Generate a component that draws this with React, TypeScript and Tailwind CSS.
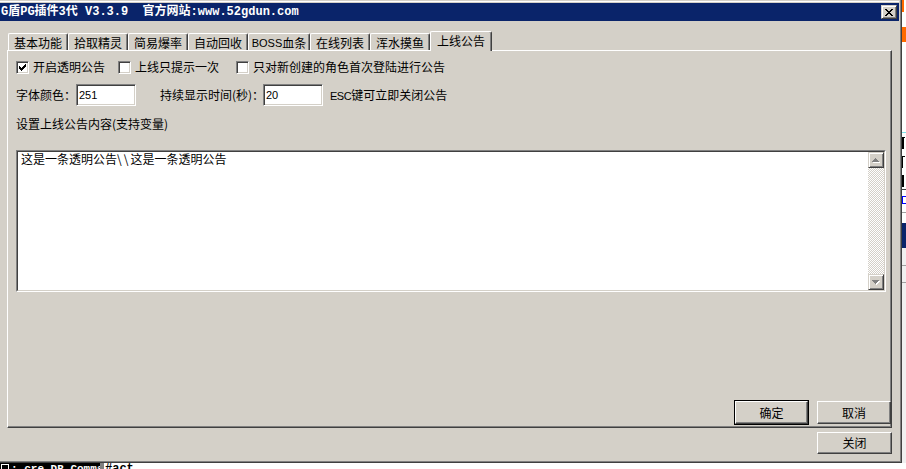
import React from "react";

const lat = "font-['Liberation_Sans',sans-serif] text-[11px]";
const raised =
  "border border-t-white border-l-white border-r-[#404040] border-b-[#404040] shadow-[inset_-1px_-1px_0_#808080] bg-[#d4d0c8]";
const raisedSb =
  "border border-t-[#d4d0c8] border-l-[#d4d0c8] border-r-[#404040] border-b-[#404040] shadow-[inset_1px_1px_0_#ffffff,inset_-1px_-1px_0_#808080] bg-[#d4d0c8]";
const sunken =
  "border border-t-[#808080] border-l-[#808080] border-r-white border-b-white shadow-[inset_1px_1px_0_#404040,inset_-1px_-1px_0_#d4d0c8]";

function Check({ checked, className = "" }: { checked?: boolean; className?: string }) {
  return (
    <div className={`w-[13px] h-[13px] shrink-0 bg-white ${sunken} flex items-center justify-center ${className}`}>
      {checked && (
        <svg width="7" height="7" viewBox="0 0 7 7" shapeRendering="crispEdges">
          {[
            [0, 2],
            [1, 3],
            [2, 4],
            [3, 3],
            [4, 2],
            [5, 1],
            [6, 0],
          ].map(([x, y]) => (
            <rect key={x} x={x} y={y} width="1" height="3" fill="#000" />
          ))}
        </svg>
      )}
    </div>
  );
}

function Arrow({ down }: { down?: boolean }) {
  const rows = [
    [3, 1],
    [2, 3],
    [1, 5],
    [0, 7],
  ];
  const tri = (dx: number, dy: number, fill: string) =>
    rows.map(([x, w], i) => (
      <rect key={fill + i} x={x + dx} y={(down ? 3 - i : i) + dy} width={w} height="1" fill={fill} />
    ));
  return (
    <svg width="8" height="5" viewBox="0 0 8 5" shapeRendering="crispEdges">
      {tri(1, 1, "#ffffff")}
      {tri(0, 0, "#808080")}
    </svg>
  );
}

function CloseGlyph() {
  const rows = ["XX....XX", ".XX..XX.", "..XXXX..", "...XX...", "..XXXX..", ".XX..XX.", "XX....XX"];
  return (
    <svg width="8" height="7" viewBox="0 0 8 7" shapeRendering="crispEdges">
      {rows.flatMap((r, y) =>
        r.split("").map((c, x) => (c === "X" ? <rect key={`${x}-${y}`} x={x} y={y} width="1" height="1" fill="#000" /> : null))
      )}
    </svg>
  );
}

const tabs: { label: React.ReactNode; w: string }[] = [
  { label: "基本功能", w: "w-[60px]" },
  { label: "拾取精灵", w: "w-[60px]" },
  { label: "简易爆率", w: "w-[60px]" },
  { label: "自动回收", w: "w-[60px]" },
  {
    label: (
      <>
        <span className={lat}>BOSS</span>血条
      </>
    ),
    w: "w-[62px]",
  },
  { label: "在线列表", w: "w-[60px]" },
  { label: "浑水摸鱼", w: "w-[60px]" },
];

export default function App() {
  return (
    <div className="w-[906px] h-[469px] overflow-hidden bg-white flex flex-col font-['Noto_Sans_CJK_SC',sans-serif] text-[12px] leading-[16px] text-black">
      <div className="flex h-[463px]">
        {/* Window */}
        <div className="w-[902px] h-[463px] flex flex-col bg-[#d4d0c8] border-r border-b border-r-[#404040] border-b-[#404040] shadow-[inset_-1px_-1px_0_#808080] pr-[2px] pb-[2px]">
          <div className="h-[1px]" />
          <div className="h-[1px] bg-white" />
          <div className="h-[1px]" />
          {/* Title bar */}
          <div className="h-[18px] bg-[#0a246a] flex items-center pl-[1px]">
            <span className="font-['Liberation_Mono','Noto_Sans_CJK_SC',monospace] font-bold text-[12px] leading-[16px] text-white whitespace-pre">
              G盾PG插件3代 V3.3.9  官方网站:www.52gdun.com
            </span>
            <div className={`ml-auto mr-[2px] w-[16px] h-[14px] ${raisedSb} flex items-center justify-center`}>
              <CloseGlyph />
            </div>
          </div>
          {/* Body */}
          <div className="flex-1 flex flex-col pt-[10px]">
            {/* Tabs */}
            <div className="h-[19px] flex items-end ml-[8px]">
              {tabs.map((t, i) => (
                <div
                  key={i}
                  className={`${t.w} h-[17px] border-t border-l border-r border-t-white border-l-white border-r-[#404040] shadow-[inset_-1px_0_0_#808080] rounded-t-[2px] flex items-center justify-center pt-[1px] whitespace-nowrap`}
                >
                  {t.label}
                </div>
              ))}
              <div className="w-[62px] h-[20px] mb-[-1px] relative z-10 bg-[#d4d0c8] border-t border-l border-r border-t-white border-l-white border-r-[#404040] shadow-[inset_-1px_0_0_#808080] rounded-t-[2px] flex justify-center pt-[1px] whitespace-nowrap">
                上线公告
              </div>
            </div>
            {/* Panel */}
            <div className="ml-[7px] w-[885px] h-[378px] border border-t-white border-l-white border-r-[#404040] border-b-[#404040] shadow-[inset_-1px_-1px_0_#808080] flex flex-col pl-[8px] pt-[8px] pb-[2px]">
              <div className="h-[16px] flex items-center whitespace-nowrap">
                <Check checked />
                <span className="ml-[4px]">开启透明公告</span>
                <Check className="ml-[13px]" />
                <span className="ml-[4px]">上线只提示一次</span>
                <Check className="ml-[17px]" />
                <span className="ml-[4px]">只对新创建的角色首次登陆进行公告</span>
              </div>
              <div className="mt-[9px] h-[22px] flex items-center whitespace-nowrap">
                <span className="w-[60px]">字体颜色：</span>
                <div className={`w-[60px] h-[22px] bg-white ${sunken} pl-[2px] flex items-center`}>
                  <span className={lat}>251</span>
                </div>
                <span className="ml-[24px] w-[103px]">持续显示时间(秒)：</span>
                <div className={`w-[60px] h-[22px] bg-white ${sunken} pl-[2px] flex items-center`}>
                  <span className={lat}>20</span>
                </div>
                <span className="ml-[7px]">
                  <span className={`${lat} tracking-[-0.5px]`}>ESC</span>键可立即关闭公告
                </span>
              </div>
              <div className="mt-[10px] h-[16px] whitespace-nowrap">设置上线公告内容(支持变量)</div>
              {/* Text area */}
              <div className="mt-[18px] w-[870px] h-[142px] border border-t-[#808080] border-l-[#808080] border-r-white border-b-white flex">
                <div className="flex-1 border border-t-[#404040] border-l-[#404040] border-r-[#d4d0c8] border-b-[#d4d0c8] bg-white flex">
                  <div className="flex-1 pl-[3px] leading-[14px] whitespace-pre">
                    这是一条透明公告<span className="tracking-[2px]">\\</span>这是一条透明公告
                  </div>
                  <div className="w-[16px] flex flex-col">
                    <div className={`h-[16px] ${raisedSb} flex items-center justify-center`}>
                      <Arrow />
                    </div>
                    <div className="flex-1 bg-[image:repeating-conic-gradient(#d4d0c8_0%_25%,#ffffff_0%_50%)] bg-[length:2px_2px]" />
                    <div className={`h-[16px] ${raisedSb} flex items-center justify-center`}>
                      <Arrow down />
                    </div>
                  </div>
                </div>
              </div>
              <div className="mt-auto h-[25px] flex items-center justify-end">
                <div className="w-[75px] h-[25px] border border-black flex">
                  <div className={`flex-1 ${raised} flex items-center justify-center`}>确定</div>
                </div>
                <div className={`ml-[8px] w-[74px] h-[23px] ${raised} flex items-center justify-center`}>取消</div>
              </div>
            </div>
            <div className="mt-[4px] ml-[817px] w-[75px] h-[22px] flex">
              <div className={`flex-1 ${raised} flex items-center justify-center`}>关闭</div>
            </div>
          </div>
        </div>
        {/* Background windows strip */}
        <div className="w-[4px] h-[463px] flex flex-col bg-white overflow-hidden">
          <div className="h-[12px] flex">
            <div className="w-[2px] bg-[#ff6a00]" />
          </div>
          <div className="h-[15px]" />
          <div className="h-[15px] bg-[#ff6a00]" />
          <div className="h-[90px]" />
          <div className="h-[1px] bg-[#7fe0e8]" />
          <div className="h-[56px] pt-[4px] flex flex-col gap-[7px]">
            <div className="w-[3px] h-[12px] border-l-2 border-t border-black" />
            <div className="w-[3px] h-[12px] border-l border-t border-black" />
            <div className="w-[3px] h-[12px] border-l-2 border-black" />
          </div>
          <div className="h-[1px] bg-[#404040]" />
          <div className="h-[6px]" />
          <div className="h-[8px] border-l border-t border-b border-[#0000ff]" />
          <div className="h-[8px]" />
          <div className="h-[1px] bg-[#a0a0a0]" />
          <div className="h-[10px]" />
          <div className="h-[25px] bg-[#0a246a]" />
          <div className="h-[17px] bg-[#f0f0f0]" />
          <div className="h-[1px] bg-[#a0a0a0]" />
          <div className="h-[16px] bg-[#f0f0f0]" />
          <div className="h-[1px] bg-[#a0a0a0]" />
          <div className="flex-1 bg-[#f0f0f0]" />
        </div>
      </div>
      {/* Bottom strip */}
      <div className="h-[6px] flex overflow-hidden">
        <div className="w-[100px] shrink-0 bg-black text-white flex items-start whitespace-nowrap overflow-hidden">
          <span className="ml-[1px] mt-[1px] w-[8px] h-[8px] shrink-0 border border-white" />
          <span className="ml-[2px] font-['Liberation_Mono',monospace] text-[11px] leading-[12px] font-bold">: cre DB Comma</span>
        </div>
        <div className="w-[4px] shrink-0 bg-[#808080]" />
        <div className="flex-1 bg-white font-['Liberation_Mono',monospace] text-[12px] leading-[12px] font-bold pl-[1px]">
          #act
        </div>
      </div>
    </div>
  );
}
